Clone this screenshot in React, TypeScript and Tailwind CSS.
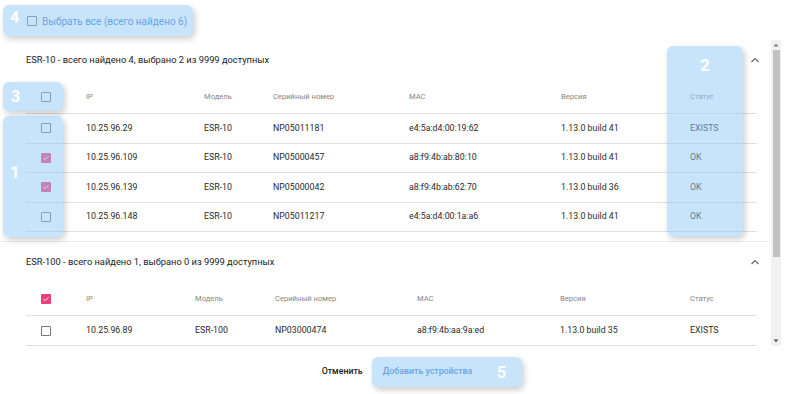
import React from "react";

type Row = { ip: string; model: string; serial: string; mac: string; ver: string; status: string; checked: boolean };

const rows1: Row[] = [
  { ip: "10.25.96.29", model: "ESR-10", serial: "NP05011181", mac: "e4:5a:d4:00:19:62", ver: "1.13.0 build 41", status: "EXISTS", checked: false },
  { ip: "10.25.96.109", model: "ESR-10", serial: "NP05000457", mac: "a8:f9:4b:ab:80:10", ver: "1.13.0 build 41", status: "OK", checked: true },
  { ip: "10.25.96.139", model: "ESR-10", serial: "NP05000042", mac: "a8:f9:4b:ab:62:70", ver: "1.13.0 build 36", status: "OK", checked: true },
  { ip: "10.25.96.148", model: "ESR-10", serial: "NP05011217", mac: "e4:5a:d4:00:1a:a6", ver: "1.13.0 build 41", status: "OK", checked: false },
];

const rows2: Row[] = [
  { ip: "10.25.96.89", model: "ESR-100", serial: "NP03000474", mac: "a8:f9:4b:aa:9a:ed", ver: "1.13.0 build 35", status: "EXISTS", checked: false },
];

function Checkbox({ checked }: { checked: boolean }) {
  if (checked) {
    return (
      <div className="w-[10px] h-[10px] rounded-[1px] bg-[#f03e7a] flex items-center justify-center">
        <svg width="8" height="8" viewBox="0 0 8 8">
          <path d="M1.4 4.1 L3.1 5.7 L6.6 2.2" stroke="white" strokeWidth="0.9" fill="none" />
        </svg>
      </div>
    );
  }
  return <div className="w-[10px] h-[10px] rounded-[1px] border-[1.5px] border-[#777]" />;
}

function Chevron() {
  return (
    <svg width="10" height="6" viewBox="0 0 10 6" className="mr-[-3px]">
      <path d="M1.5 5 L5 1.6 L8.5 5" stroke="#666" strokeWidth="1.2" fill="none" />
    </svg>
  );
}

function Table({ rows, cols, headChecked }: { rows: Row[]; cols: string; headChecked: boolean }) {
  return (
    <div>
      <div className={`grid ${cols} h-[34px] items-center border-b border-[#e0e0e0] text-[7.6px] text-[#878787]`}>
        <div className="pl-[15px]"><Checkbox checked={headChecked} /></div>
        <div>IP</div>
        <div>Модель</div>
        <div>Серийный номер</div>
        <div>MAC</div>
        <div>Версия</div>
        <div>Статус</div>
      </div>
      {rows.map((r) => (
        <div key={r.ip} className={`grid ${cols} h-[29.6px] items-center border-b border-[#e0e0e0] text-[8.8px] text-[#2a2a2a]`}>
          <div className="pl-[15px]"><Checkbox checked={r.checked} /></div>
          <div>{r.ip}</div>
          <div>{r.model}</div>
          <div>{r.serial}</div>
          <div>{r.mac}</div>
          <div>{r.ver}</div>
          <div>{r.status}</div>
        </div>
      ))}
    </div>
  );
}

function Overlay({ className, children }: { className: string; children?: React.ReactNode }) {
  return (
    <div className={`absolute rounded-[6px] bg-[rgba(145,201,247,0.5)] shadow-[2px_3px_6px_rgba(0,0,0,0.2)] ${className}`}>
      {children}
    </div>
  );
}

export default function App() {
  return (
    <div className="w-[790px] h-[394px] bg-white relative overflow-hidden font-['Roboto',sans-serif]">
      <div className="h-[40px] flex items-center pl-[27px] pt-[2px]">
        <Checkbox checked={false} />
        <span className="ml-[5px] text-[10px] text-[#3a7bd0]">Выбрать все (всего найдено 6)</span>
      </div>
      <div className="h-[306px] flex">
        <div className="w-[771px] overflow-hidden">
          <div className="pl-[26px] pr-[14px] pb-[9px]">
            <div className="h-[40px] flex items-center justify-between">
              <span className="text-[9.3px] text-[#222]">ESR-10 - всего найдено 4, выбрано 2 из 9999 доступных</span>
              <Chevron />
            </div>
            <Table rows={rows1} cols="grid-cols-[60px_118px_69px_136px_152px_129px_1fr]" headChecked={false} />
          </div>
          <div className="border-t border-[#ececec] pl-[26px] pr-[14px]">
            <div className="h-[40px] flex items-center justify-between">
              <span className="text-[9.3px] text-[#222]">ESR-100 - всего найдено 1, выбрано 0 из 9999 доступных</span>
              <Chevron />
            </div>
            <Table rows={rows2} cols="grid-cols-[60px_109px_80px_142px_143px_130px_1fr]" headChecked={true} />
          </div>
        </div>
        <div className="w-[10px] bg-[#f1f1f1] flex flex-col items-center">
          <svg width="6" height="4" viewBox="0 0 6 4" className="mt-[3px]"><path d="M0.5 3.5 L3 0.8 L5.5 3.5Z" fill="#777" /></svg>
          <div className="mt-[3px] w-[7px] h-[207px] bg-[#c1c1c1]" />
          <div className="flex-1" />
          <svg width="6" height="4" viewBox="0 0 6 4" className="mb-[3px]"><path d="M0.5 0.5 L3 3.2 L5.5 0.5Z" fill="#555" /></svg>
        </div>
      </div>
      <div className="h-[48px] flex items-center justify-center gap-[4px] pt-[4px] pl-[4px]">
        <button className="px-[8px] text-[8.8px] font-medium text-[#222]">Отменить</button>
        <button className="px-[8px] text-[8.8px] font-medium text-[#3a7bd0]">Добавить устройства</button>
      </div>

      <Overlay className="left-[3px] top-[5px] w-[190px] h-[31px]">
        <span className="absolute left-[7px] top-[5px] text-[16px] font-bold text-white leading-none">4</span>
      </Overlay>
      <Overlay className="left-[3px] top-[82px] w-[60px] h-[29px]">
        <span className="absolute left-[8px] top-[7px] text-[16px] font-bold text-white leading-none">3</span>
      </Overlay>
      <Overlay className="left-[3px] top-[116px] w-[60px] h-[121px]">
        <span className="absolute left-[7px] top-[48px] text-[17px] font-bold text-white leading-none">1</span>
      </Overlay>
      <Overlay className="left-[667px] top-[46px] w-[76px] h-[190px]">
        <span className="absolute left-[33px] top-[11px] text-[17px] font-bold text-white leading-none">2</span>
      </Overlay>
      <Overlay className="left-[372px] top-[357px] w-[150px] h-[30px]">
        <span className="absolute left-[125px] top-[8px] text-[16px] font-bold text-white leading-none">5</span>
      </Overlay>
    </div>
  );
}
